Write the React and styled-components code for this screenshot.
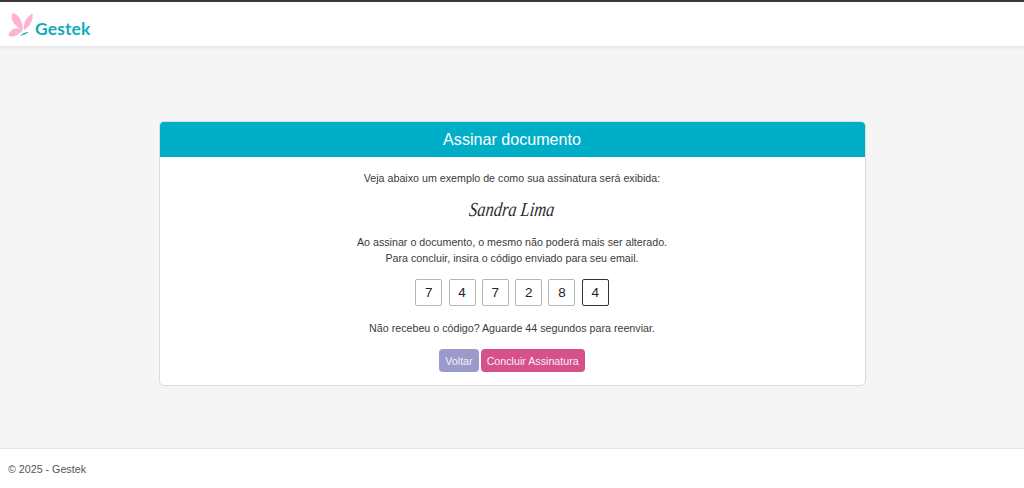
import React from 'react';
import styled, { createGlobalStyle } from 'styled-components';

const GlobalStyle = createGlobalStyle`
  html, body { margin: 0; padding: 0; height: 100%; }
  body {
    background: #f5f5f5;
    color: #3b3b3b;
    font-family: "Liberation Sans", Arial, sans-serif;
    font-size: 10.7px;
    line-height: 16px;
  }
  #root { height: 100%; }
`;

const Page = styled.div`
  display: flex;
  flex-direction: column;
  height: 488px;
  overflow: hidden;
`;

const Navbar = styled.header`
  display: flex;
  align-items: flex-start;
  gap: 1px;
  height: 44px;
  flex: none;
  padding-left: 8px;
  background: #fff;
  border-top: 2px solid #3a3a3a;
  box-shadow: 0 1px 4px rgba(0, 0, 0, 0.1);
`;

const LogoMark = styled.svg`
  flex: none;
  width: 26px;
  height: 26px;
  margin-top: 10px;
`;

const LogoText = styled.span`
  font-family: Lato, "Open Sans", sans-serif;
  font-size: 17.5px;
  font-weight: 700;
  letter-spacing: 0.1px;
  line-height: 20px;
  color: #12a9bd;
  margin-top: 17px;
`;

const Main = styled.main`
  flex: 1;
  padding-top: 75px;
`;

const Card = styled.section`
  width: 705px;
  margin: 0 auto;
  background: #fff;
  border: 1px solid #dcdcdc;
  border-radius: 5px;
  overflow: hidden;
`;

const CardHeader = styled.h1`
  margin: 0;
  height: 35px;
  background: #00afc7;
  color: #fff;
  font-size: 16.1px;
  font-weight: 400;
  line-height: 35px;
  text-align: center;
`;

const CardBody = styled.div`
  display: flex;
  flex-direction: column;
  align-items: center;
  padding: 13px 0 13px;
  text-align: center;
`;

const Line = styled.p`
  margin: 0;
`;

const Signature = styled.div`
  margin: 10px 0 11px;
  height: 27px;
  font-family: "Liberation Serif", serif;
  font-style: italic;
  font-size: 20px;
  line-height: 27px;
  color: #2b2b2b;
  transform: scaleX(0.82) skewX(-8deg);
`;

const CodeRow = styled.div`
  display: flex;
  gap: 6.3px;
  margin: 13px 0 14px;
`;

const CodeBox = styled.div`
  width: 27px;
  height: 27px;
  box-sizing: border-box;
  display: flex;
  align-items: center;
  justify-content: center;
  border: 1px solid ${({ $active }) => ($active ? '#333' : '#b5b5b5')};
  border-radius: 2px;
  background: #fff;
  color: #222;
  font-size: 13.5px;
`;

const Actions = styled.div`
  display: flex;
  gap: 2px;
  margin-top: 13px;
`;

const Button = styled.button`
  height: 23px;
  padding: 0 6px;
  border: 0;
  border-radius: 4px;
  background: ${({ $primary }) => ($primary ? '#d6508a' : '#9a9acb')};
  color: #f4eef4;
  font-family: inherit;
  font-size: 10.7px;
`;

const Footer = styled.footer`
  flex: none;
  height: 39px;
  padding-left: 8px;
  background: #fff;
  border-top: 1px solid #e4e4e4;
  color: #555;
  line-height: 40px;
`;

const Butterfly = () => (
  <LogoMark viewBox="0 0 26 26">
    <path d="M4.5 1 C9.5 1.5 14 7 15 17.5 C9.5 15.5 4 11.5 3.8 6 C3.8 4 4 2 4.5 1 Z" fill="#fdb3d1" />
    <path d="M24.5 1.5 C25.5 8 22 15 16 18 C15 11 18 5 24.5 1.5 Z" fill="#fdb3d1" />
    <path d="M0.5 23.5 C1.5 17.5 8 14.5 15 17.5 C12.5 21.5 7 25 3 24.5 C2 24.4 1 24 0.5 23.5 Z" fill="#fdb3d1" />
    <path d="M12 24.5 C14 21.5 17 20 21 20 C19 21 18 22 16.5 22.5 C15 23 13.5 23.5 12 24.5 Z" fill="#12a9bd" />
  </LogoMark>
);

const code = ['7', '4', '7', '2', '8', '4'];

export default function App() {
  return (
    <Page>
      <GlobalStyle />
      <Navbar>
        <Butterfly />
        <LogoText>Gestek</LogoText>
      </Navbar>
      <Main>
        <Card>
          <CardHeader>Assinar documento</CardHeader>
          <CardBody>
            <Line>Veja abaixo um exemplo de como sua assinatura será exibida:</Line>
            <Signature>Sandra Lima</Signature>
            <Line>Ao assinar o documento, o mesmo não poderá mais ser alterado.</Line>
            <Line>Para concluir, insira o código enviado para seu email.</Line>
            <CodeRow>
              {code.map((digit, i) => (
                <CodeBox key={i} $active={i === code.length - 1}>{digit}</CodeBox>
              ))}
            </CodeRow>
            <Line>Não recebeu o código? Aguarde 44 segundos para reenviar.</Line>
            <Actions>
              <Button>Voltar</Button>
              <Button $primary>Concluir Assinatura</Button>
            </Actions>
          </CardBody>
        </Card>
      </Main>
      <Footer>© 2025 - Gestek</Footer>
    </Page>
  );
}
